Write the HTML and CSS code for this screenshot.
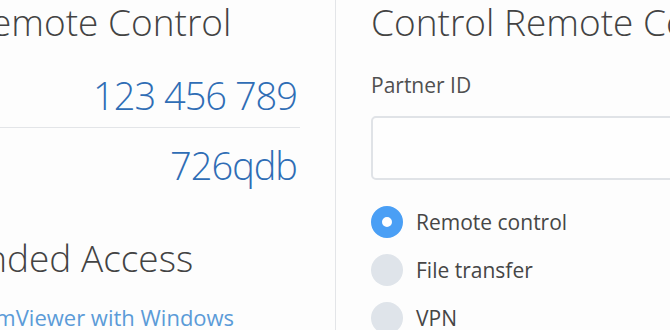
FILE: index.html
```html
<!DOCTYPE html>
<html>
  <head>
    <meta charset="UTF-8" />
    <meta name="viewport" content="width=device-width, initial-scale=1.0" />
    <title>Remote Control</title>
    <link rel="stylesheet" href="styles.css">
  </head>

  <body>
    <div class="app">
      <section class="panel allow">
        <h1>Allow Remote Control</h1>
        <div class="field">
          <span class="label">Your ID</span>
          <span class="value">123 456 789</span>
        </div>
        <div class="field last">
          <span class="label">Password</span>
          <span class="value">726qdb</span>
        </div>
        <h1 class="second">Unattended Access</h1>
        <label class="check">
          <span class="box"></span>
          <a href="">Start TeamViewer with Windows</a>
        </label>
      </section>

      <section class="panel control">
        <h1>Control Remote Computer</h1>
        <label class="caption" for="partner">Partner ID</label>
        <input id="partner" class="partner" type="text" />
        <ul class="options">
          <li><span class="radio checked"></span>Remote control</li>
          <li><span class="radio"></span>File transfer</li>
          <li><span class="radio"></span>VPN</li>
        </ul>
      </section>
    </div>
  </body>
</html>
```

FILE: styles.css
```css
* {
  padding: 0px;
  margin: 0px;
  box-sizing: border-box;
}

body {
  --text: #454545;
  --blue: #2f6db5;
  --link: #5b9bd8;
  --line: #e3e5e8;
  background: #fdfdfd;
  font-family: "Open Sans", "Noto Sans", sans-serif;
  color: var(--text);
  overflow: hidden;
  height: 100vh;
}

.app {
  display: flex;
  height: 100%;
  margin-left: -128px;
}

.panel {
  flex: none;
}

h1 {
  font-weight: 300;
  font-size: 37px;
  line-height: 43px;
  color: #434343;
  white-space: nowrap;
}

/* left side */
.allow {
  width: 464px;
  padding: 0 38px 0 0;
  border-right: 1px solid var(--line);
}

.field {
  display: flex;
  justify-content: space-between;
  align-items: baseline;
  padding: 14px 0 9px;
  border-bottom: 1px solid var(--line);
  margin-right: -3px;
}
.field:first-of-type {
  margin-top: 15px;
}
.field.last {
  border-bottom: none;
}
.field .label {
  font-size: 21px;
  color: #9a9a9a;
}
.field .value {
  font-size: 38px;
  line-height: 46px;
  font-weight: 300;
  letter-spacing: -1px;
  color: var(--blue);
  margin-right: 3px;
}

.allow h1.second {
  margin-top: 39px;
}

.check {
  display: flex;
  align-items: center;
  gap: 12px;
  margin-top: 24px;
  font-size: 22px;
  line-height: 28px;
}
.check .box {
  width: 20px;
  height: 20px;
  border: 2px solid #cfd5dc;
  border-radius: 3px;
}
.check a {
  color: var(--link);
  text-decoration: none;
  white-space: nowrap;
}

/* right side */
.control {
  width: 520px;
  padding-left: 35px;
}

.caption {
  display: block;
  margin-top: 28px;
  font-size: 21px;
  line-height: 28px;
  color: #505050;
}

.partner {
  display: block;
  margin-top: 17px;
  width: 100%;
  height: 64px;
  border: 2px solid #e0e3e7;
  border-radius: 5px;
  background: #fefefe;
  font: inherit;
}

.options {
  list-style: none;
  margin-top: 18px;
}
.options li {
  display: flex;
  align-items: center;
  gap: 13px;
  height: 48px;
  font-size: 21px;
  color: #464646;
}

.radio {
  flex: none;
  width: 32px;
  height: 32px;
  border-radius: 50%;
  background: #dfe4ea;
}
.radio.checked {
  border: 11px solid #4a9ff5;
  background: #ffffff;
}
```
